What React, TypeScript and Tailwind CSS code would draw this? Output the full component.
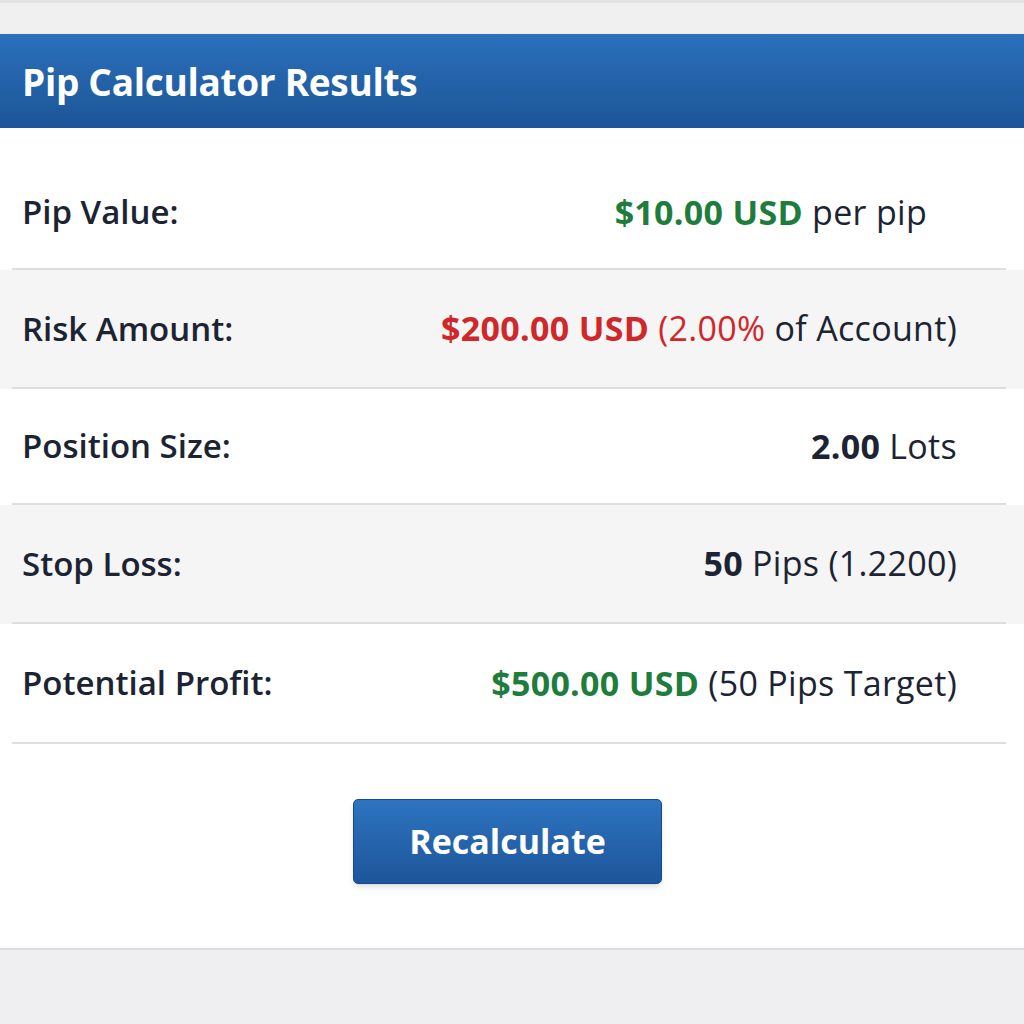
import React from "react";

type Row = {
	label: string;
	value: React.ReactNode;
	shaded?: boolean;
	height: string;
};

const rows: Row[] = [
	{
		label: "Pip Value:",
		height: "h-[140px] pt-[28px] pr-[97px]",
		value: (
			<>
				<span className="font-bold text-[#1e7d3c]">$10.00 USD</span> per pip
			</>
		),
	},
	{
		label: "Risk Amount:",
		shaded: true,
		height: "h-[117px] pr-[67px]",
		value: (
			<>
				<span className="font-bold text-[#d0282a]">$200.00 USD</span>{" "}
				<span className="text-[#d0282a]">(2.00%</span> of Account)
			</>
		),
	},
	{
		label: "Position Size:",
		height: "h-[114px] pr-[67px]",
		value: (
			<>
				<span className="font-bold">2.00</span> Lots
			</>
		),
	},
	{
		label: "Stop Loss:",
		shaded: true,
		height: "h-[117px] pr-[67px]",
		value: (
			<>
				<span className="font-bold">50</span> Pips (1.2200)
			</>
		),
	},
	{
		label: "Potential Profit:",
		height: "h-[118px] pr-[67px]",
		value: (
			<>
				<span className="font-bold text-[#1e7d3c]">$500.00 USD</span> (50 Pips Target)
			</>
		),
	},
];

function App() {
	return (
		<div
			className="w-[1024px] h-[1024px] bg-[#f0f0f1] flex flex-col overflow-hidden text-[#1c2333]"
			style={{ fontFamily: '"Open Sans", "Noto Sans", sans-serif' }}
		>
			<div className="h-[34px] border-t-[3px] border-[#e2e2e4] bg-[#f0f0f1]" />

			<div className="h-[94px] bg-gradient-to-b from-[#2b70bc] to-[#1c5597] flex items-center px-[22px] pt-[2px] shadow-sm">
				<h1 className="text-[37px] font-bold text-white tracking-[-0.3px]">Pip Calculator Results</h1>
			</div>

			<div className="bg-white flex flex-col">
				{rows.map((row) => (
					<div key={row.label} className={row.shaded ? "bg-[#f5f5f5]" : "bg-white"}>
						<div className={"flex items-center justify-between pl-[22px] " + row.height}>
							<span className="text-[33px] font-semibold">{row.label}</span>
							<span className="text-[34px] tracking-[0.3px]">{row.value}</span>
						</div>
						<div className="mx-[12px] w-[994px] h-[2px] bg-[#dedee0]" />
					</div>
				))}

				<div className="h-[204px] flex items-center justify-center pr-[9px] pb-[10px]">
					<button className="w-[309px] h-[85px] rounded-[5px] border border-[#17498a] bg-gradient-to-b from-[#2d74c0] to-[#1d5599] text-white text-[34px] font-bold shadow-md">
						Recalculate
					</button>
				</div>
			</div>

			<div className="flex-1 border-t-2 border-[#dcdcde] bg-[#efeff1]" />
		</div>
	);
}

export default App;
